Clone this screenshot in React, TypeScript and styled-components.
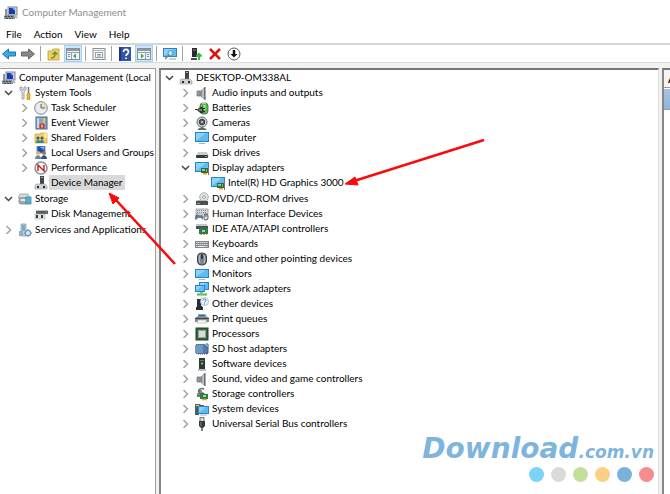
import React, { useState } from "react";
import styled, { createGlobalStyle } from "styled-components";

const GlobalStyle = createGlobalStyle`
  *, *::before, *::after { box-sizing: border-box; }
  body {
    margin: 0;
    background: #fff;
    color: #000;
    font: 10px/15px Lato, "Noto Sans", sans-serif;
  }
  button { font: inherit; color: inherit; }
`;

const Window = styled.div`
  position: relative;
  display: flex;
  flex-direction: column;
  min-height: 100vh;
  overflow: hidden;
`;

const TitleBar = styled.header`
  display: flex;
  align-items: center;
  gap: 4px;
  height: 25px;
  padding-left: 4px;
  color: #8e8e8e;
`;

const Title = styled.h1`
  margin: 0;
  font-size: 10px;
  font-weight: 400;
`;

const MenuBar = styled.nav`
  display: flex;
  height: 20px;
  border-bottom: 2px solid #d6d6d6;
`;

const MenuButton = styled.button`
  padding: 0 6px;
  border: 0;
  background: none;
`;

const Toolbar = styled.div`
  display: flex;
  align-items: center;
  gap: 1px;
  height: 18px;
  border-bottom: 1px solid #dcdcdc;
`;

const ToolButton = styled.button<{ $active?: boolean }>`
  display: grid;
  place-items: center;
  width: 18px;
  height: 17px;
  padding: 0;
  border: 1px solid ${(p) => (p.$active ? "#a5d3f8" : "transparent")};
  background: ${(p) => (p.$active ? "#cce8ff" : "none")};
`;

const Separator = styled.span`
  width: 1px;
  height: 15px;
  margin: 0 3px 0 2px;
  background: #a2a2a2;
`;

const Panes = styled.main`
  display: flex;
  flex: 1;
  gap: 3px;
  padding-top: 5px;
  background: #f1f1f1;
`;

const ConsolePane = styled.section`
  flex: 0 0 156px;
  overflow: hidden;
  padding-top: 1px;
  border-top: 1px solid #a0a0a0;
  border-right: 1px solid #a0a0a0;
  background: #fff;
`;

const DevicePane = styled.section`
  flex: 1;
  min-width: 0;
  border-top: 2px solid #777;
  border-left: 2px solid #858585;
  border-right: 1px solid #dedede;
  background: #fff;
`;

const ActionsPane = styled.aside`
  flex: 0 0 8px;
  overflow: hidden;
  border-top: 2px solid #777;
  border-left: 2px solid #8a8684;
  background: #fff;
`;

const ActionsTitle = styled.h2`
  height: 18px;
  margin: 0;
  padding: 2px 0 0 4px;
  border-bottom: 1px solid #999;
  background: #f4f4f4;
  font-size: 10px;
  font-weight: 700;
`;

const ActionsGroup = styled.div`
  height: 21px;
  margin-top: 1px;
  background: linear-gradient(#a6c2e3, #94b4da);
  border-bottom: 1px solid #7f9fc8;
`;

const List = styled.ul<{ $indent?: boolean }>`
  margin: 0;
  padding: 0 0 ${(p) => (p.$indent ? 1 : 0)}px ${(p) => (p.$indent ? 16 : 0)}px;
  list-style: none;
`;

const Row = styled.div<{ $root?: boolean }>`
  display: flex;
  align-items: center;
  gap: 1px;
  height: 15px;
  padding-left: ${(p) => (p.$root ? 2 : 0)}px;
  white-space: nowrap;
`;

const ToggleSlot = styled.span`
  display: flex;
  flex: 0 0 17px;
  justify-content: center;
`;

const Toggle = styled.button`
  display: grid;
  place-items: center;
  width: 11px;
  height: 13px;
  padding: 0;
  border: 0;
  background: none;
`;

const Label = styled.span<{ $selected?: boolean }>`
  padding: 0 2px;
  background: ${(p) => (p.$selected ? "#d9d9d9" : "none")};
`;

const Glyph = styled.svg`
  display: block;
  flex: none;
`;

const Annotations = styled.svg`
  position: absolute;
  top: 0;
  left: 0;
  pointer-events: none;
`;

const Brand = styled.div`
  position: absolute;
  right: 16px;
  bottom: 12px;
  display: flex;
  flex-direction: column;
  align-items: flex-end;
  gap: 1px;
`;

const BrandName = styled.a`
  color: #7fb5dd;
  font: italic 700 28px/28px "DejaVu Sans", sans-serif;
  text-decoration: none;
`;

const BrandDomain = styled.span`
  font-size: 17px;
`;

const Dots = styled.div`
  display: flex;
  gap: 7px;
`;

const Dot = styled.span<{ $color: string }>`
  width: 15px;
  height: 15px;
  border-radius: 50%;
  background: ${(p) => p.$color};
`;

/* ---------- icons ---------- */

const Monitor = ({ x = 0, y = 2, w = 14, h = 9 }) => (
  <g>
    <rect x={x} y={y} width={w} height={h} fill="#2f83bd" />
    <rect x={x + 1} y={y + 1} width={w - 2} height={h - 2} fill="#5ebcf2" />
    <path d={`M${x + 1} ${y + 1}h${w - 4}l-${w - 5} ${h - 3}h-1z`} fill="#8bd3fa" />
  </g>
);

const Card = () => (
  <g>
    <rect x="6" y="7" width="7" height="5" fill="#2f6a3c" />
    <rect x="7" y="8" width="3" height="2" fill="#8ecb8d" />
    <rect x="11" y="8" width="1" height="3" fill="#73b278" />
    <path d="M8 12h4v1.500h-4z" fill="#eba12c" />
    <path d="M13.500 6v8" stroke="#777" />
  </g>
);

const Speaker = () => (
  <g>
    <path d="M2 5h3v5h-3z" fill="#9aa0a4" stroke="#66696c" strokeWidth=".7" />
    <path d="M5 5l5-4v13l-5-4z" fill="#858b90" />
    <path d="M8 3v9" stroke="#c8cdd1" strokeWidth="1.500" />
    <path d="M10 1v13" stroke="#53585c" />
  </g>
);

const ComputerTools = () => (
  <g>
    <rect x="4" y="1" width="9" height="8" fill="#cbd2d6" stroke="#82898e" />
    <rect x="5" y="2" width="6" height="6" fill="#1739ba" />
    <path d="M8 2h3v3z" fill="#7da4ff" />
    <path d="M1 3h2v6h-2zM1 9h10v4h-11v-3z" fill="#8b9499" />
    <path d="M1 10.500h9M2 12.500h7" stroke="#39454c" strokeDasharray="2 1" />
    <path d="M10 9l3 3" stroke="#adb9bc" strokeWidth="2" />
  </g>
);

const icons: Record<string, React.ReactNode> = {
  console: <ComputerTools />,
  tools: (
    <g>
      <path d="M2 1v3l2 2v7h2v-7l2-2v-3l-2 0v3h-2v-3z" fill="#e6e8e9" stroke="#8d9295" strokeWidth=".8" />
      <path d="M10.500 1v6" stroke="#747b80" strokeWidth="1.500" />
      <rect x="9" y="7" width="3" height="7" rx="1" fill="#edb52c" stroke="#bd8419" strokeWidth=".6" />
    </g>
  ),
  clock: (
    <g>
      <circle cx="7" cy="7" r="6.300" fill="#e9edf0" stroke="#7d868c" />
      <path d="M7 7V1.800A5.200 5.200 0 0 1 12.200 7z" fill="#f6dc9c" />
      <path d="M7 3v4h4" fill="none" stroke="#4e6377" />
    </g>
  ),
  event: (
    <g>
      <rect x="2" y="1" width="11" height="12" fill="#86a7c9" stroke="#42698f" />
      <path d="M4 2v10" stroke="#dfe9f3" strokeWidth="1.500" />
      <path d="M10 2v5" stroke="#e9c743" strokeWidth="2" />
      <circle cx="8" cy="10" r="2.700" fill="#cf342a" />
      <path d="M8 8.500v3" stroke="#fff" />
    </g>
  ),
  shared: (
    <g>
      <path d="M1 3h5l1-1h6v10h-12z" fill="#f0ce68" stroke="#c89e37" strokeWidth=".7" />
      <path d="M10 2h3v5h-3z" fill="#f9e49c" />
      <circle cx="4" cy="7" r="1.500" fill="#3c5962" />
      <circle cx="8" cy="7" r="1.500" fill="#3c5962" />
      <path d="M2 12c0-4 4-4 4-1 0-3 4-3 4 1z" fill="#318899" />
    </g>
  ),
  users: (
    <g>
      <rect x="3" y="0" width="8" height="7" fill="#1e4cb2" stroke="#8193aa" />
      <path d="M6 1h4v3z" fill="#83b2ff" />
      <circle cx="4" cy="7" r="2" fill="#dcb17b" />
      <circle cx="10" cy="7" r="2" fill="#a97740" />
      <path d="M1 13c0-5 6-5 6 0z" fill="#6687ad" />
      <path d="M7 13c0-5 6-5 6 0z" fill="#344f84" />
    </g>
  ),
  performance: (
    <g>
      <circle cx="7" cy="7" r="6" fill="#fff" stroke="#8a8d8e" strokeWidth="1.500" />
      <path d="M4 10V4l6 6V4" fill="none" stroke="#ce2027" strokeWidth="1.500" />
    </g>
  ),
  device: (
    <g>
      <path d="M6 0h4v8h-4z" fill="#3f4548" />
      <path d="M7 1.500h2" stroke="#a6acb0" />
      <path d="M2 8h9l2 2v3h-12v-3z" fill="#cfd2d4" stroke="#94989b" strokeWidth=".6" />
      <path d="M3 10h2v2h-2zM9 10h2v2h-2z" fill="#252a2d" />
    </g>
  ),
  storage: (
    <g>
      <path d="M2 2h8l2 4h-12z" fill="#d3d9dd" stroke="#8b989f" strokeWidth=".7" />
      <rect x="1" y="6" width="9" height="6" rx="2" fill="#9eabb1" stroke="#6f7d84" strokeWidth=".7" />
      <ellipse cx="5" cy="8" rx="3" ry="1" fill="#e9eff1" />
      <rect x="8" y="5" width="5" height="7" fill="#58b1dc" stroke="#357f9e" strokeWidth=".7" />
      <path d="M9 11h3" stroke="#55b443" strokeWidth="1.500" />
    </g>
  ),
  disk: (
    <g>
      <path d="M2 3h12v4h-12z" fill="#575c5f" />
      <path d="M2 3.500h12" stroke="#b8bdc0" />
      <path d="M1 7h10v5h-10z" fill="#e2e4e5" stroke="#a5aaad" strokeWidth=".6" />
      <path d="M2 8h2v3h-2zM7 8h2v3h-2z" fill="#313638" />
      <path d="M12 5.500h1" stroke="#5bdd44" />
    </g>
  ),
  services: (
    <g>
      <path d="M3 1h5v12h-5z" fill="#bdd1df" stroke="#7894aa" strokeWidth=".7" />
      <path d="M4 3h3M4 5h3M4 7h3" stroke="#537b9b" />
      <path d="M1 8h4v5h-4z" fill="#9baeba" />
      <circle cx="10" cy="10" r="2.700" fill="#d8e8f4" stroke="#6998be" strokeWidth="1.300" />
      <path d="M10 6v2M10 12v2M6 10h2M12 10h2" stroke="#6998be" />
    </g>
  ),
  speaker: <Speaker />,
  battery: (
    <g>
      <rect x="5" y="2" width="8" height="11" rx="3" fill="#4cbc4b" stroke="#57615a" strokeWidth=".8" />
      <rect x="7" y="1" width="4" height="2" fill="#b8c6be" />
      <path d="M9.500 4v5" stroke="#9ae887" strokeWidth="2" />
      <path d="M0 8.500h3l2-2h3v5h-3l-2-2M8 7.500h2M8 10.500h2" fill="#353a35" stroke="#353a35" />
      <path d="M4 9h3" stroke="#ddd16c" />
    </g>
  ),
  camera: (
    <g>
      <circle cx="7" cy="6" r="5" fill="#d6d9db" stroke="#666b6e" />
      <circle cx="7" cy="6" r="2.800" fill="#555b60" stroke="#33393d" />
      <circle cx="7" cy="6" r="1" fill="#d1d8dc" />
      <path d="M7 11v2M3 13.500c1-2 7-2 8 0z" fill="#60666a" stroke="#60666a" />
    </g>
  ),
  computer: (
    <g>
      <Monitor y={1} h={10} />
      <path d="M4 12.500h6" stroke="#97b6c9" />
    </g>
  ),
  drive: (
    <g>
      <path d="M3 6h9l2 4h-13z" fill="#c9cccd" />
      <rect x="1" y="9" width="12" height="3" rx="1" fill="#363a3c" />
      <path d="M10 10.500h2" stroke="#55bb57" />
    </g>
  ),
  display: (
    <g>
      <Monitor y={1} h={10} />
      <Card />
    </g>
  ),
  disc: (
    <g>
      <circle cx="9" cy="5" r="4.300" fill="#e2e4e4" stroke="#9b9fa1" strokeWidth=".8" />
      <circle cx="9" cy="5" r="1.400" fill="#fff" stroke="#888d90" strokeWidth=".8" />
      <path d="M2 8h9l2 2h-12z" fill="#b3b7b9" />
      <rect x="1" y="9" width="12" height="4" fill="#4b5153" />
      <path d="M2 11.500h3" stroke="#67bd62" />
    </g>
  ),
  hid: (
    <g>
      <rect x="1" y="2" width="12" height="5" fill="#d6dadd" stroke="#8a9297" strokeWidth=".7" />
      <path d="M2 3.500h10M2 5.500h10" stroke="#858e94" strokeDasharray="1 1" />
      <path d="M0 12c0-6 2-5 4-4s3-1 4 1l0 4-2-2h-3l-2 2z" fill="#627d91" />
      <rect x="9" y="7" width="4" height="6" rx="2" fill="#e4e8ea" stroke="#4e565b" />
      <path d="M11 7v3" stroke="#4e565b" />
    </g>
  ),
  ide: (
    <g>
      <path d="M1 2h11l1 4h-12z" fill="#c3c7c8" />
      <rect x="1" y="4" width="12" height="3" fill="#4b5153" />
      <rect x="4" y="6" width="9" height="6" fill="#317b51" />
      <rect x="7" y="8" width="3" height="2" fill="#a7d2ad" />
      <path d="M5 12.500h7" stroke="#d6ae43" strokeDasharray="2 1" />
    </g>
  ),
  keyboard: (
    <g>
      <rect x="0" y="4" width="14" height="7" fill="#7f868a" />
      <path d="M1 5.500h12M1 7.500h12M1 9.500h12" stroke="#dfe3e5" strokeDasharray="1.500 .5" />
      <path d="M4 9.500h6" stroke="#f5f6f6" />
    </g>
  ),
  mouse: (
    <g>
      <rect x="2.500" y="1" width="9" height="12" rx="4" fill="#79858e" stroke="#343d43" />
      <path d="M5 3c-1 2-1 5 0 8M9 3c1 2 1 5 0 8" fill="none" stroke="#bbc7ce" />
      <rect x="6" y="2" width="2" height="5" rx="1" fill="#30383d" />
    </g>
  ),
  monitor: (
    <g>
      <Monitor />
      <path d="M4 12.500h6" stroke="#a9b6bd" />
    </g>
  ),
  network: (
    <g>
      <Monitor x={4} y={0} w={10} h={8} />
      <Monitor x={0} y={3} w={10} h={7} />
      <path d="M2 12.500h10" stroke="#4db453" strokeWidth="2" />
      <path d="M5 10h3v3h-3z" fill="#77cd6e" />
    </g>
  ),
  other: (
    <g>
      <path d="M2 2h4v7h-4zM1 10h7v3h-7z" fill="#292f31" />
      <path d="M2 9l5 1" stroke="#292f31" strokeWidth="2" />
      <circle cx="9.500" cy="4.500" r="4" fill="#edf4f8" stroke="#9db4c2" strokeWidth=".8" />
      <path d="M8 3.500c0-2 3-2 3 0 0 1-1.500 1-1.500 2M9.500 6.500v1" fill="none" stroke="#3b80ac" />
    </g>
  ),
  printer: (
    <g>
      <path d="M3 2h8v4h-8z" fill="#65c2c0" />
      <path d="M4 3.500h6" stroke="#4060a2" />
      <path d="M0 6l3-2h8l3 2v4h-14z" fill="#868b8e" />
      <path d="M0 6.500h14" stroke="#404648" />
      <path d="M3 8h8l1 3h-10z" fill="#f7f8f8" stroke="#a5acb0" strokeWidth=".6" />
    </g>
  ),
  processor: (
    <g>
      <rect x="1" y="1" width="12" height="12" fill="#35643f" stroke="#1e422b" />
      <rect x="3.500" y="3.500" width="7" height="7" fill="#d8ddd8" stroke="#91a594" />
    </g>
  ),
  sd: (
    <g>
      <path d="M1 2h9l3 3v7h-12z" fill="#547caa" />
      <path d="M0 3h8v8h-8z" fill="#7298c1" />
      <path d="M11 2h2v9h-2" fill="none" stroke="#395b82" />
      <path d="M3 12h9" stroke="#45688f" strokeDasharray="1 1" />
    </g>
  ),
  software: (
    <g>
      <rect x="4" y="1" width="6" height="11" fill="#303739" />
      <path d="M5 3.500h4" stroke="#6c7779" />
      <path d="M6 6.500h2" stroke="#55df46" strokeWidth="2" />
      <path d="M3 13h8" stroke="#777d80" />
    </g>
  ),
  controller: (
    <g>
      <path d="M9 2c-5-2-7 3-4 4h3M2 7h6M3 4h4" fill="none" stroke="#5f6d66" strokeWidth="1.500" />
      <path d="M2 9h5l2-3" fill="none" stroke="#344b3e" strokeWidth="1.500" />
      <rect x="5" y="7" width="8" height="5" fill="#327b4d" />
      <rect x="8" y="8" width="3" height="2" fill="#9fd8a7" />
      <path d="M7 12.500h5" stroke="#e2a734" strokeWidth="1.500" />
    </g>
  ),
  system: (
    <g>
      <path d="M0 2h5l1 1h3v3h-9z" fill="#5d676c" />
      <path d="M1 3.500h3" stroke="#eec556" />
      <path d="M0 5h4v8h-4z" fill="#4d5b62" />
      <Monitor x={3} y={4} w={11} h={8} />
      <path d="M5 13h7" stroke="#a7b6bd" />
    </g>
  ),
  usb: (
    <g>
      <rect x="5" y="0.500" width="4" height="4" fill="#d6d9da" stroke="#5d6263" strokeWidth=".8" />
      <path d="M4 4h6v5l-2 2h-2l-2-2z" fill="#33383a" />
      <path d="M7 10v4" stroke="#4e5456" strokeWidth="1.500" />
      <path d="M6 5v4" stroke="#848b8e" />
    </g>
  ),
};

const toolIcons: Record<string, React.ReactNode> = {
  back: <path d="M.5 7L6.500 2v3h7v4h-7v3z" fill="#38a9e4" stroke="#1b75ac" />,
  forward: <path d="M13.500 7L7.500 2v3h-7v4h7v3z" fill="#888" stroke="#666" />,
  up: (
    <g>
      <path d="M1 4h4l1-2h6v11h-11z" fill="#efcf66" stroke="#c39c38" strokeWidth=".8" />
      <path d="M4 11c4 0 4-2 4-5M5.500 7.500L8 5l2.500 2.500" fill="none" stroke="#66972c" strokeWidth="1.500" />
    </g>
  ),
  tree: (
    <g>
      <rect x=".5" y="1.500" width="13" height="11" fill="#eff3f5" stroke="#869097" />
      <path d="M1 3h12" stroke="#8d989f" strokeWidth="2" />
      <path d="M1 5.500h12M5.500 5v7" stroke="#94a2aa" />
      <path d="M2 7.500h2M2 9.500h2" stroke="#6695bb" />
      <path d="M10 6.500v5l-3-2.500z" fill="#48a33e" />
    </g>
  ),
  properties: (
    <g>
      <rect x="1" y="1.500" width="12" height="11" fill="#f2f4f5" stroke="#899096" />
      <path d="M1 3.500h12" stroke="#b0b7bc" />
      <rect x="3.500" y="5.500" width="7" height="5" fill="#fff" stroke="#9ba3a8" />
      <path d="M5 7.500h4M5 9h4" stroke="#7c96aa" />
    </g>
  ),
  help: (
    <g>
      <rect x="1" y="0" width="12" height="14" fill="#3153aa" />
      <path d="M2 0v14" stroke="#1e3579" strokeWidth="2" />
      <path d="M5.500 5c0-4 5-3 5 0 0 2-2.500 2-2.500 4M8 10.500v1.500" fill="none" stroke="#fff" strokeWidth="1.700" />
    </g>
  ),
  actions: (
    <g>
      <rect x=".5" y="1.500" width="13" height="11" fill="#eff3f5" stroke="#869097" />
      <path d="M1 3h12" stroke="#8d989f" strokeWidth="2" />
      <path d="M1 5.500h12M8.500 5v7" stroke="#94a2aa" />
      <path d="M10 7.500h2M10 9.500h2" stroke="#6695bb" />
      <path d="M4 6.500v5l3-2.500z" fill="#48a33e" />
    </g>
  ),
  scan: (
    <g>
      <Monitor x={0} y={1} w={14} h={9} />
      <circle cx="7.500" cy="6" r="2.500" fill="#bce6fa" stroke="#5595ba" />
      <path d="M6 8l-4 4" stroke="#6c8495" strokeWidth="1.500" />
      <path d="M6 12h7" stroke="#8aa2b0" />
    </g>
  ),
  update: (
    <g>
      <path d="M3 1h5v9h-5z" fill="#272c2e" />
      <path d="M4 3h3" stroke="#858c8e" />
      <path d="M2 11h6v2h-6z" fill="#454a4c" />
      <path d="M10 13V7M7.500 9.500L10 7l2.500 2.500" fill="none" stroke="#35b942" strokeWidth="2" />
    </g>
  ),
  remove: <path d="M2 2L12 12M12 2L2 12" stroke="#dc1111" strokeWidth="2.500" />,
  disable: (
    <g>
      <circle cx="7" cy="7" r="6" fill="#fff" stroke="#5a5a5a" />
      <path d="M7 3v4" stroke="#111" strokeWidth="2.500" />
      <path d="M3.500 7h7L7 10.500z" fill="#111" />
    </g>
  ),
};

const Icon = ({ name }: { name: string }) => (
  <Glyph width="14" height="14" viewBox="0 0 14 14" aria-hidden="true">
    {icons[name]}
  </Glyph>
);

const Chevron = ({ open }: { open: boolean }) => (
  <Glyph width="9" height="9" viewBox="0 0 9 9" fill="none" aria-hidden="true">
    {open ? (
      <path d="M1 3l3.500 3.500L8 3" stroke="#444" strokeWidth="1.500" />
    ) : (
      <path d="M2.500 1L6.500 5l-4 4" stroke="#a3a3a3" strokeWidth="1.500" />
    )}
  </Glyph>
);

/* ---------- data ---------- */

type Kind = "open" | "closed" | "leaf";
type Item = { label: string; icon: string; kind?: Kind; selected?: boolean; children?: Item[] };

const consoleItems: Item[] = [
  {
    label: "System Tools",
    icon: "tools",
    kind: "open",
    children: [
      { label: "Task Scheduler", icon: "clock" },
      { label: "Event Viewer", icon: "event" },
      { label: "Shared Folders", icon: "shared" },
      { label: "Local Users and Groups", icon: "users" },
      { label: "Performance", icon: "performance" },
      { label: "Device Manager", icon: "device", kind: "leaf", selected: true },
    ],
  },
  {
    label: "Storage",
    icon: "storage",
    kind: "open",
    children: [{ label: "Disk Management", icon: "disk", kind: "leaf" }],
  },
  { label: "Services and Applications", icon: "services" },
];

const deviceItems: Item[] = [
  {
    label: "DESKTOP-OM338AL",
    icon: "device",
    kind: "open",
    children: [
      { label: "Audio inputs and outputs", icon: "speaker" },
      { label: "Batteries", icon: "battery" },
      { label: "Cameras", icon: "camera" },
      { label: "Computer", icon: "computer" },
      { label: "Disk drives", icon: "drive" },
      {
        label: "Display adapters",
        icon: "display",
        kind: "open",
        children: [{ label: "Intel(R) HD Graphics 3000", icon: "display", kind: "leaf" }],
      },
      { label: "DVD/CD-ROM drives", icon: "disc" },
      { label: "Human Interface Devices", icon: "hid" },
      { label: "IDE ATA/ATAPI controllers", icon: "ide" },
      { label: "Keyboards", icon: "keyboard" },
      { label: "Mice and other pointing devices", icon: "mouse" },
      { label: "Monitors", icon: "monitor" },
      { label: "Network adapters", icon: "network" },
      { label: "Other devices", icon: "other" },
      { label: "Print queues", icon: "printer" },
      { label: "Processors", icon: "processor" },
      { label: "SD host adapters", icon: "sd" },
      { label: "Software devices", icon: "software" },
      { label: "Sound, video and game controllers", icon: "speaker" },
      { label: "Storage controllers", icon: "controller" },
      { label: "System devices", icon: "system" },
      { label: "Universal Serial Bus controllers", icon: "usb" },
    ],
  },
];

type Tool = { icon: string; label: string; active?: boolean };

const toolGroups: Tool[][] = [
  [
    { icon: "back", label: "Back" },
    { icon: "forward", label: "Forward" },
  ],
  [
    { icon: "up", label: "Up one level" },
    { icon: "tree", label: "Show or hide console tree", active: true },
  ],
  [{ icon: "properties", label: "Properties" }],
  [
    { icon: "help", label: "Help" },
    { icon: "actions", label: "Show or hide action pane", active: true },
  ],
  [{ icon: "scan", label: "Scan for hardware changes" }],
  [
    { icon: "update", label: "Update driver" },
    { icon: "remove", label: "Uninstall device" },
    { icon: "disable", label: "Disable device" },
  ],
];

const dotColors = ["#7dd3f7", "#dadada", "#c2df9b", "#fbd084", "#7ab2dc", "#f68b90"];

const TreeNode = ({ item }: { item: Item }) => {
  const kind = item.kind ?? "closed";
  const [open, setOpen] = useState(kind === "open");
  return (
    <li>
      <Row>
        <ToggleSlot>
          {kind !== "leaf" && (
            <Toggle
              aria-label={`Toggle ${item.label}`}
              aria-expanded={open}
              onClick={() => setOpen(!open)}
            >
              <Chevron open={open} />
            </Toggle>
          )}
        </ToggleSlot>
        <Icon name={item.icon} />
        <Label $selected={item.selected}>{item.label}</Label>
      </Row>
      {open && item.children && (
        <List $indent>
          {item.children.map((child) => (
            <TreeNode key={child.label} item={child} />
          ))}
        </List>
      )}
    </li>
  );
};

export default function App() {
  return (
    <>
      <GlobalStyle />
      <Window>
        <TitleBar>
          <Icon name="console" />
          <Title>Computer Management</Title>
        </TitleBar>
        <MenuBar>
          {["File", "Action", "View", "Help"].map((name) => (
            <MenuButton key={name}>{name}</MenuButton>
          ))}
        </MenuBar>
        <Toolbar role="toolbar" aria-label="Standard">
          {toolGroups.map((group, index) => (
            <React.Fragment key={group[0].icon}>
              {index > 0 && <Separator />}
              {group.map((tool) => (
                <ToolButton key={tool.icon} aria-label={tool.label} $active={tool.active}>
                  <Glyph width="14" height="14" viewBox="0 0 14 14" aria-hidden="true">
                    {toolIcons[tool.icon]}
                  </Glyph>
                </ToolButton>
              ))}
            </React.Fragment>
          ))}
        </Toolbar>
        <Panes>
          <ConsolePane>
            <Row $root>
              <Icon name="console" />
              <Label>Computer Management (Local</Label>
            </Row>
            <List>
              {consoleItems.map((item) => (
                <TreeNode key={item.label} item={item} />
              ))}
            </List>
          </ConsolePane>
          <DevicePane>
            <List>
              {deviceItems.map((item) => (
                <TreeNode key={item.label} item={item} />
              ))}
            </List>
          </DevicePane>
          <ActionsPane>
            <ActionsTitle>Actions</ActionsTitle>
            <ActionsGroup />
          </ActionsPane>
        </Panes>
        <Annotations width="670" height="494" viewBox="0 0 670 494" aria-hidden="true">
          <g stroke="#fa0a0a" fill="#fa0a0a">
            <path d="M484 140L354 181M175 264L115 199" strokeWidth="2.500" />
            <path d="M345 184l10-7 3 8zM109 193l10 5-6 6z" strokeWidth="1" />
          </g>
        </Annotations>
        <Brand>
          <BrandName href="#">
            Download<BrandDomain>.com.vn</BrandDomain>
          </BrandName>
          <Dots>
            {dotColors.map((color) => (
              <Dot key={color} $color={color} />
            ))}
          </Dots>
        </Brand>
      </Window>
    </>
  );
}
